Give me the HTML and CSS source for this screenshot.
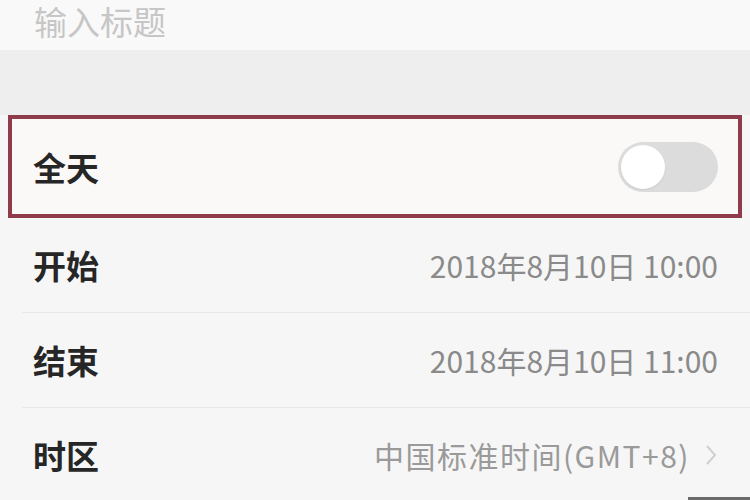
FILE: index.html
```html
<!DOCTYPE html>
<html lang="zh-CN">
<head>
<meta charset="utf-8">
<link rel="stylesheet" href="styles.css">
</head>
<body>
<div class="page">
  <div class="title"><span class="placeholder">输入标题</span></div>
  <div class="band"></div>
  <div class="allday">
    <span class="label">全天</span>
    <span class="toggle"><span class="knob"></span></span>
  </div>
  <div class="row">
    <span class="label">开始</span>
    <span class="value">2018年8月10日 10:00</span>
  </div>
  <div class="row">
    <span class="label">结束</span>
    <span class="value">2018年8月10日 11:00</span>
  </div>
  <div class="row">
    <span class="label">时区</span>
    <span class="value tz"><span>中国标准时间(GMT+8)</span><svg class="chev" width="14" height="24" viewBox="0 0 14 24"><path d="M3 3 L11 12 L3 21" fill="none" stroke="#cfcfcf" stroke-width="2"/></svg></span>
  </div>
  <div class="corner"></div>
</div>
</body>
</html>
```
FILE: styles.css
```css
html, body {
  margin: 0;
  padding: 0;
}
body {
  background: #f6f6f6;
  font-family: "Noto Sans CJK SC", "Noto Sans", sans-serif;
}
.page {
  position: relative;
  width: 750px;
  height: 500px;
  overflow: hidden;
  background: #f6f6f6;
}
.title {
  height: 50px;
  box-sizing: border-box;
  padding: 0 0 0 34px;
  display: flex;
  align-items: flex-start;
  background: #f9f9f9;
}
.placeholder {
  font-size: 33px;
  line-height: 42px;
  color: #c6c6c6;
}
.band {
  height: 65px;
  background: #eeeeee;
}
.allday {
  height: 103px;
  box-sizing: border-box;
  margin: 0 8px;
  border: 4px solid #8e3b4b;
  background: #fbf8f8;
  display: flex;
  align-items: center;
  justify-content: space-between;
  padding: 0 20px 0 21px;
}
.label {
  font-size: 33px;
  font-weight: 700;
  color: #262626;
}
.toggle {
  width: 100px;
  height: 50px;
  border-radius: 25px;
  background: #dcdcdc;
  display: flex;
  align-items: center;
  padding: 0 3px;
  box-sizing: border-box;
}
.knob {
  width: 44px;
  height: 44px;
  border-radius: 50%;
  background: #ffffff;
  box-shadow: 0 1px 2px rgba(0,0,0,0.08);
}
.row {
  height: 95px;
  box-sizing: border-box;
  margin-left: 22px;
  padding: 0 32px 0 11px;
  border-bottom: 1px solid #e9e9e9;
  display: flex;
  align-items: center;
  justify-content: space-between;
}
.value {
  font-size: 30px;
  color: #8a8a8a;
}
.tz {
  display: flex;
  align-items: center;
  gap: 14px;
  color: #9a9a9a;
  letter-spacing: 1.5px;
}
.chev {
  display: block;
}
.corner {
  position: absolute;
  right: 0;
  bottom: 0;
  width: 62px;
  height: 3px;
  background: #6a6a6a;
}
```
